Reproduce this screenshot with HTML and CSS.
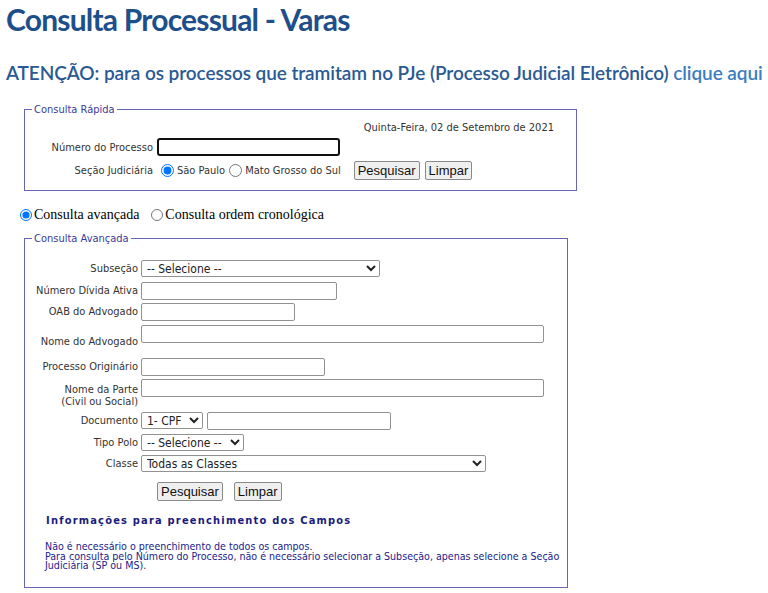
FILE: index.html
```html
<!DOCTYPE html>
<html lang="pt-BR">
<head>
  <meta charset="UTF-8">
  <meta name="viewport" content="width=device-width, initial-scale=1.0">
  <title>Consulta Processual - Varas</title>
  <link rel="stylesheet" href="styles.css">
</head>
<body>
  <h1 class="page-title">Consulta Processual - Varas</h1>
  <p class="notice">ATENÇÃO: para os processos que tramitam no PJe (Processo Judicial Eletrônico) <a href="#">clique aqui</a></p>

  <form action="">
    <fieldset class="box box-quick">
      <legend>Consulta Rápida</legend>
      <div class="today">Quinta-Feira, 02 de Setembro de 2021</div>
      <div class="quick-row">
        <label class="quick-label" for="numero">Número do Processo</label>
        <input type="text" id="numero" class="field field-active">
      </div>
      <div class="quick-row quick-row-options">
        <span class="quick-label">Seção Judiciária</span>
        <label class="choice"><input type="radio" name="secao" checked>São Paulo</label>
        <label class="choice"><input type="radio" name="secao">Mato Grosso do Sul</label>
        <button type="button" class="btn btn-search">Pesquisar</button>
        <button type="reset" class="btn">Limpar</button>
      </div>
    </fieldset>
  </form>

  <div class="mode">
    <label class="mode-choice"><input type="radio" name="modo" checked>Consulta avançada</label>
    <label class="mode-choice"><input type="radio" name="modo">Consulta ordem cronológica</label>
  </div>

  <form action="">
    <fieldset class="box box-advanced">
      <legend>Consulta Avançada</legend>

      <div class="adv-row">
        <label class="adv-label" for="subsecao">Subseção</label>
        <select id="subsecao" class="field w-subsecao">
          <option>-- Selecione --</option>
        </select>
      </div>
      <div class="adv-row">
        <label class="adv-label" for="divida">Número Dívida Ativa</label>
        <input type="text" id="divida" class="field w-divida">
      </div>
      <div class="adv-row">
        <label class="adv-label" for="oab">OAB do Advogado</label>
        <input type="text" id="oab" class="field w-oab">
      </div>
      <div class="adv-row adv-row-tall">
        <label class="adv-label" for="advogado">Nome do Advogado</label>
        <input type="text" id="advogado" class="field w-long">
      </div>
      <div class="adv-row">
        <label class="adv-label" for="originario">Processo Originário</label>
        <input type="text" id="originario" class="field w-originario">
      </div>
      <div class="adv-row adv-row-tall">
        <label class="adv-label" for="parte">Nome da Parte<br>(Civil ou Social)</label>
        <input type="text" id="parte" class="field w-long">
      </div>
      <div class="adv-row">
        <label class="adv-label" for="documento">Documento</label>
        <div class="doc-fields">
          <select id="documento" class="field w-doctype">
            <option>1- CPF</option>
            <option>2- CNPJ</option>
          </select>
          <input type="text" class="field w-docnum">
        </div>
      </div>
      <div class="adv-row">
        <label class="adv-label" for="polo">Tipo Polo</label>
        <select id="polo" class="field w-polo">
          <option>-- Selecione --</option>
        </select>
      </div>
      <div class="adv-row">
        <label class="adv-label" for="classe">Classe</label>
        <select id="classe" class="field w-classe">
          <option>Todas as Classes</option>
        </select>
      </div>

      <div class="adv-actions">
        <button type="button" class="btn">Pesquisar</button>
        <button type="reset" class="btn btn-clear">Limpar</button>
      </div>

      <h3 class="info-title">Informações para preenchimento dos Campos</h3>
      <p class="info-text">
        Não é necessário o preenchimento de todos os campos.<br>
        Para consulta pelo Número do Processo, não é necessário selecionar a Subseção, apenas selecione a Seção<br>
        Judiciária (SP ou MS).
      </p>
    </fieldset>
  </form>
</body>
</html>
```

FILE: styles.css
```css
body {
  margin: 0;
  padding: 0 6px;
  font-family: "DejaVu Sans Condensed", "DejaVu Sans", sans-serif;
  font-size: 11px;
  color: #333;
  background: #fff;
}
form {
  margin: 0;
}
.page-title {
  margin: 0;
  padding-top: 1px;
  font-family: Lato, sans-serif;
  font-weight: 700;
  font-size: 30px;
  line-height: 36px;
  letter-spacing: -0.8px;
  color: #1e4f8b;
}
.notice {
  margin: 24px 0 0;
  font-family: Lato, sans-serif;
  font-weight: 600;
  font-size: 19px;
  line-height: 24px;
  letter-spacing: -0.08px;
  white-space: nowrap;
  color: #2a5a93;
}
.notice a {
  color: #3c7dc0;
  text-decoration: none;
}

/* caixas */
.box {
  box-sizing: border-box;
  margin: 0 0 0 18px;
  padding: 0;
  border: 1px solid #6565b4;
}
.box legend {
  margin-left: 7px;
  padding: 0 2px;
  font-size: 11px;
  line-height: 13px;
  color: #3a3a9c;
}
.box-quick {
  width: 553px;
  margin-top: 18px;
  padding: 5px 22px 10px 0;
}
.box-advanced {
  width: 544px;
  margin-top: 8px;
  padding: 15px 0 16px 0;
}

.today {
  text-align: right;
  line-height: 13px;
}
.quick-row {
  display: flex;
  align-items: center;
  margin-top: 4px;
}
.quick-row-options {
  height: 20px;
}
.quick-label {
  width: 128px;
  margin-right: 4px;
  text-align: right;
}
.choice {
  display: flex;
  align-items: center;
}
.choice input {
  width: 13px;
  height: 13px;
  margin: 0 3px 0 4px;
}
.btn-search {
  margin-left: 13px;
  margin-right: 5px;
}

.field {
  box-sizing: border-box;
  height: 18px;
  padding: 0 3px;
  border: 1px solid #929292;
  border-radius: 2px;
  font-family: "DejaVu Sans Condensed", "DejaVu Sans", sans-serif;
  font-size: 12px;
  color: #222;
  background: #fff;
}
select.field {
  height: 17px;
  padding: 0 1px;
}
.field-active {
  width: 183px;
  border: 2px solid #111;
  border-radius: 3px;
  outline: none;
}
.btn {
  box-sizing: border-box;
  height: 19px;
  padding: 0 3px;
  border: 1px solid #8a8a8a;
  border-radius: 2px;
  background: #efefef;
  font-family: "Liberation Sans", Arial, sans-serif;
  font-size: 13px;
  color: #111;
}

/* modo de consulta */
.mode {
  display: flex;
  margin: 15px 0 0 14px;
  font-family: "Liberation Serif", serif;
  font-size: 14px;
  line-height: 18px;
  color: #000;
}
.mode-choice {
  display: flex;
  align-items: center;
  margin-right: 12px;
}
.mode-choice input {
  width: 12px;
  height: 12px;
  margin: 0 2px 0 0;
}

/* consulta avancada */
.adv-row {
  display: flex;
  min-height: 18px;
  margin-bottom: 3.5px;
}
.adv-row-tall {
  min-height: 29.5px;
}
.adv-label {
  align-self: center;
  width: 113px;
  margin-right: 3px;
  text-align: right;
  line-height: 12px;
}
.adv-row-tall .adv-label {
  padding-top: 5px;
}
.adv-row .field,
.doc-fields {
  align-self: flex-start;
}
.doc-fields {
  display: flex;
  gap: 4px;
}
.w-subsecao { width: 239px; }
.w-divida { width: 196px; }
.w-oab { width: 154px; }
.w-long { width: 403px; }
.w-originario { width: 184px; }
.w-doctype { width: 62px; }
.w-docnum { width: 184px; }
.w-polo { width: 103px; }
.w-classe { width: 345px; }

.adv-actions {
  display: flex;
  margin-top: 9px;
  padding-left: 132px;
}
.btn-clear {
  margin-left: 11px;
}
.info-title {
  margin: 13px 0 0;
  padding-left: 21px;
  font-size: 11px;
  font-weight: bold;
  line-height: 14px;
  letter-spacing: 1.2px;
  color: #1b1b7d;
}
.info-text {
  margin: 14px 0 0;
  padding-left: 20px;
  font-size: 10.6px;
  line-height: 9.5px;
  color: #22228a;
}
```
